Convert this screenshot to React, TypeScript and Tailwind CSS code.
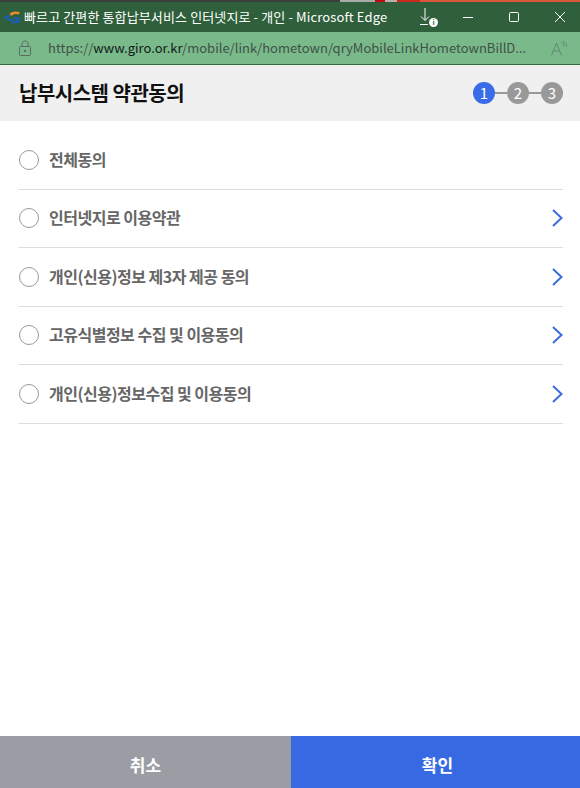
const terms = [
  { label: "전체동의", arrow: false },
  { label: "인터넷지로 이용약관", arrow: true },
  { label: "개인(신용)정보 제3자 제공 동의", arrow: true },
  { label: "고유식별정보 수집 및 이용동의", arrow: true },
  { label: "개인(신용)정보수집 및 이용동의", arrow: true },
];

const font = "font-['Noto_Sans_CJK_KR','Noto_Sans',sans-serif]";

function TitleBar() {
  return (
    <div className="flex h-[30px] items-center bg-[#2f5f3b] pl-[3px] text-white">
      <svg width="17" height="13" viewBox="0 0 17 13" className="shrink-0">
        <path d="M0 6.5 L6 3.5 L7.5 5.5 L4 6.5 L8 8.5 L6.5 10 Z" fill="#1c5fb0" />
        <path d="M6.5 3 C9 0 13 0 16.5 1 L16 3.5 C13 2.5 10.5 3 8.5 5 Z" fill="#ee8a2e" />
        <path d="M8.5 7 C9 10 11.5 10.5 13.5 10 L13.5 8.5 L11 8.5 L11 6 L16.5 6 L16.5 11.5 C12.5 13.5 8 12.5 6.5 9 Z" fill="#1c5fb0" />
      </svg>
      <span className={`ml-[4px] whitespace-nowrap text-[13px] tracking-[0.12px] ${font}`}>
        빠르고 간편한 통합납부서비스 인터넷지로 - 개인 - Microsoft Edge
      </span>
      <div className="relative ml-auto mr-[-3px] flex h-full items-center">
        <div className="relative mr-[10px] flex w-[20px] justify-center">
          <svg width="14" height="18" viewBox="0 0 14 18" fill="none" stroke="white" strokeWidth="1">
            <path d="M7 0 V12 M3 8.5 L7 12.5 L11 8.5 M2 16.5 H10" />
          </svg>
          <span className="absolute left-[14px] top-[10px] flex h-[9px] w-[9px] items-center justify-center rounded-full bg-white text-[7px] font-bold leading-none text-[#2f5f3b]">
            i
          </span>
        </div>
        <div className="flex w-[46px] justify-center">
          <svg width="10" height="10" viewBox="0 0 10 10" stroke="white" strokeWidth="1">
            <path d="M0 5.5 H10" />
          </svg>
        </div>
        <div className="flex w-[46px] justify-center">
          <svg width="10" height="10" viewBox="0 0 10 10" fill="none" stroke="white" strokeWidth="1">
            <rect x="0.5" y="0.5" width="9" height="9" rx="1" />
          </svg>
        </div>
        <div className="flex w-[46px] justify-center">
          <svg width="10" height="10" viewBox="0 0 10 10" stroke="white" strokeWidth="1">
            <path d="M0 0 L10 10 M10 0 L0 10" />
          </svg>
        </div>
      </div>
    </div>
  );
}

function AddressBar() {
  return (
    <div className="flex h-[33px] items-center border-b border-[#2f6f3f] bg-[#7ab98a] pl-[19px] pr-[13px]">
      <svg width="12" height="16" viewBox="0 0 12 16" fill="none" stroke="#5c6b62" strokeWidth="1" className="shrink-0">
        <rect x="0.5" y="6.5" width="11" height="9" rx="1" />
        <path d="M3 6.5 V4 C3 2 4.2 1 6 1 C7.8 1 9 2 9 4 V6.5" />
        <circle cx="6" cy="11" r="0.8" fill="#5c6b62" />
      </svg>
      <div className={`ml-[17px] min-w-0 flex-1 whitespace-nowrap text-[13px] text-[#3f5248] ${font}`}>
        https://<span className="text-[#10201a]">www.giro.or.kr</span>
        /mobile/link/hometown/qryMobileLinkHometownBillD...
      </div>
      <svg width="16" height="15" viewBox="0 0 16 15" fill="none" stroke="#5f8a70" strokeWidth="1" className="shrink-0">
        <path d="M0.5 14.5 L5.5 2 L10.5 14.5 M2.5 10 H8.5 M10 1 C12 2 13 3.5 13 5.5 M12 0 C14.5 1 15.5 3 15.5 5.5" />
      </svg>
    </div>
  );
}

function Steps() {
  return (
    <div className="flex items-center">
      {[1, 2, 3].map((n) => (
        <div key={n} className="flex items-center">
          {n > 1 && <span className="h-[2px] w-[12px] bg-[#999999]" />}
          <span
            className={`flex h-[22px] w-[22px] items-center justify-center rounded-full text-[15px] font-normal text-white ${
              n === 1 ? "bg-[#3a6ce8]" : "bg-[#999999]"
            }`}
          >
            {n}
          </span>
        </div>
      ))}
    </div>
  );
}

export default function App() {
  return (
    <div className={`flex h-[788px] w-[580px] flex-col overflow-hidden bg-white ${font}`}>
      <div className="flex h-[2px]">
        <div className="w-[340px] bg-[#3a3f3c]" />
        <div className="w-[35px] bg-[#a8aca8]" />
        <div className="w-[10px] bg-[#c00a12]" />
        <div className="w-[12px] bg-[#b8b0a8]" />
        <div className="w-[23px] bg-[#cc2a20]" />
        <div className="flex-1 bg-[#d9573a]" />
      </div>
      <TitleBar />
      <AddressBar />
      <div className="flex h-[56px] items-center justify-between bg-[#f0f0f0] pl-[19px] pr-[17px]">
        <h1 className="text-[20px] font-bold tracking-[-0.5px] text-[#111111]">납부시스템 약관동의</h1>
        <Steps />
      </div>
      <ul className="flex-1 pl-[19px] pr-[17px] pt-[10px]">
        {terms.map((t) => (
          <li key={t.label} className="flex h-[58.5px] items-center justify-between border-b border-[#dddddd]">
            <div className="flex items-center gap-[10px]">
              <span className="h-5 w-5 rounded-full border-[1.5px] border-[#999999] bg-white" />
              <span className="pb-[2px] text-[16px] font-bold tracking-[-0.5px] text-[#666666]">{t.label}</span>
            </div>
            {t.arrow && (
              <svg width="11" height="18" viewBox="0 0 11 18" fill="none" stroke="#3a6ce0" strokeWidth="2">
                <path d="M1 1 L9.5 9 L1 17" />
              </svg>
            )}
          </li>
        ))}
      </ul>
      <div className="flex h-[52px]">
        <button className="flex-1 bg-[#9a9da4] pt-[6px] text-[17px] font-bold text-white">취소</button>
        <button className="w-[289px] bg-[#376ae2] pl-1 pt-[6px] text-[17px] font-bold text-white">확인</button>
      </div>
    </div>
  );
}
